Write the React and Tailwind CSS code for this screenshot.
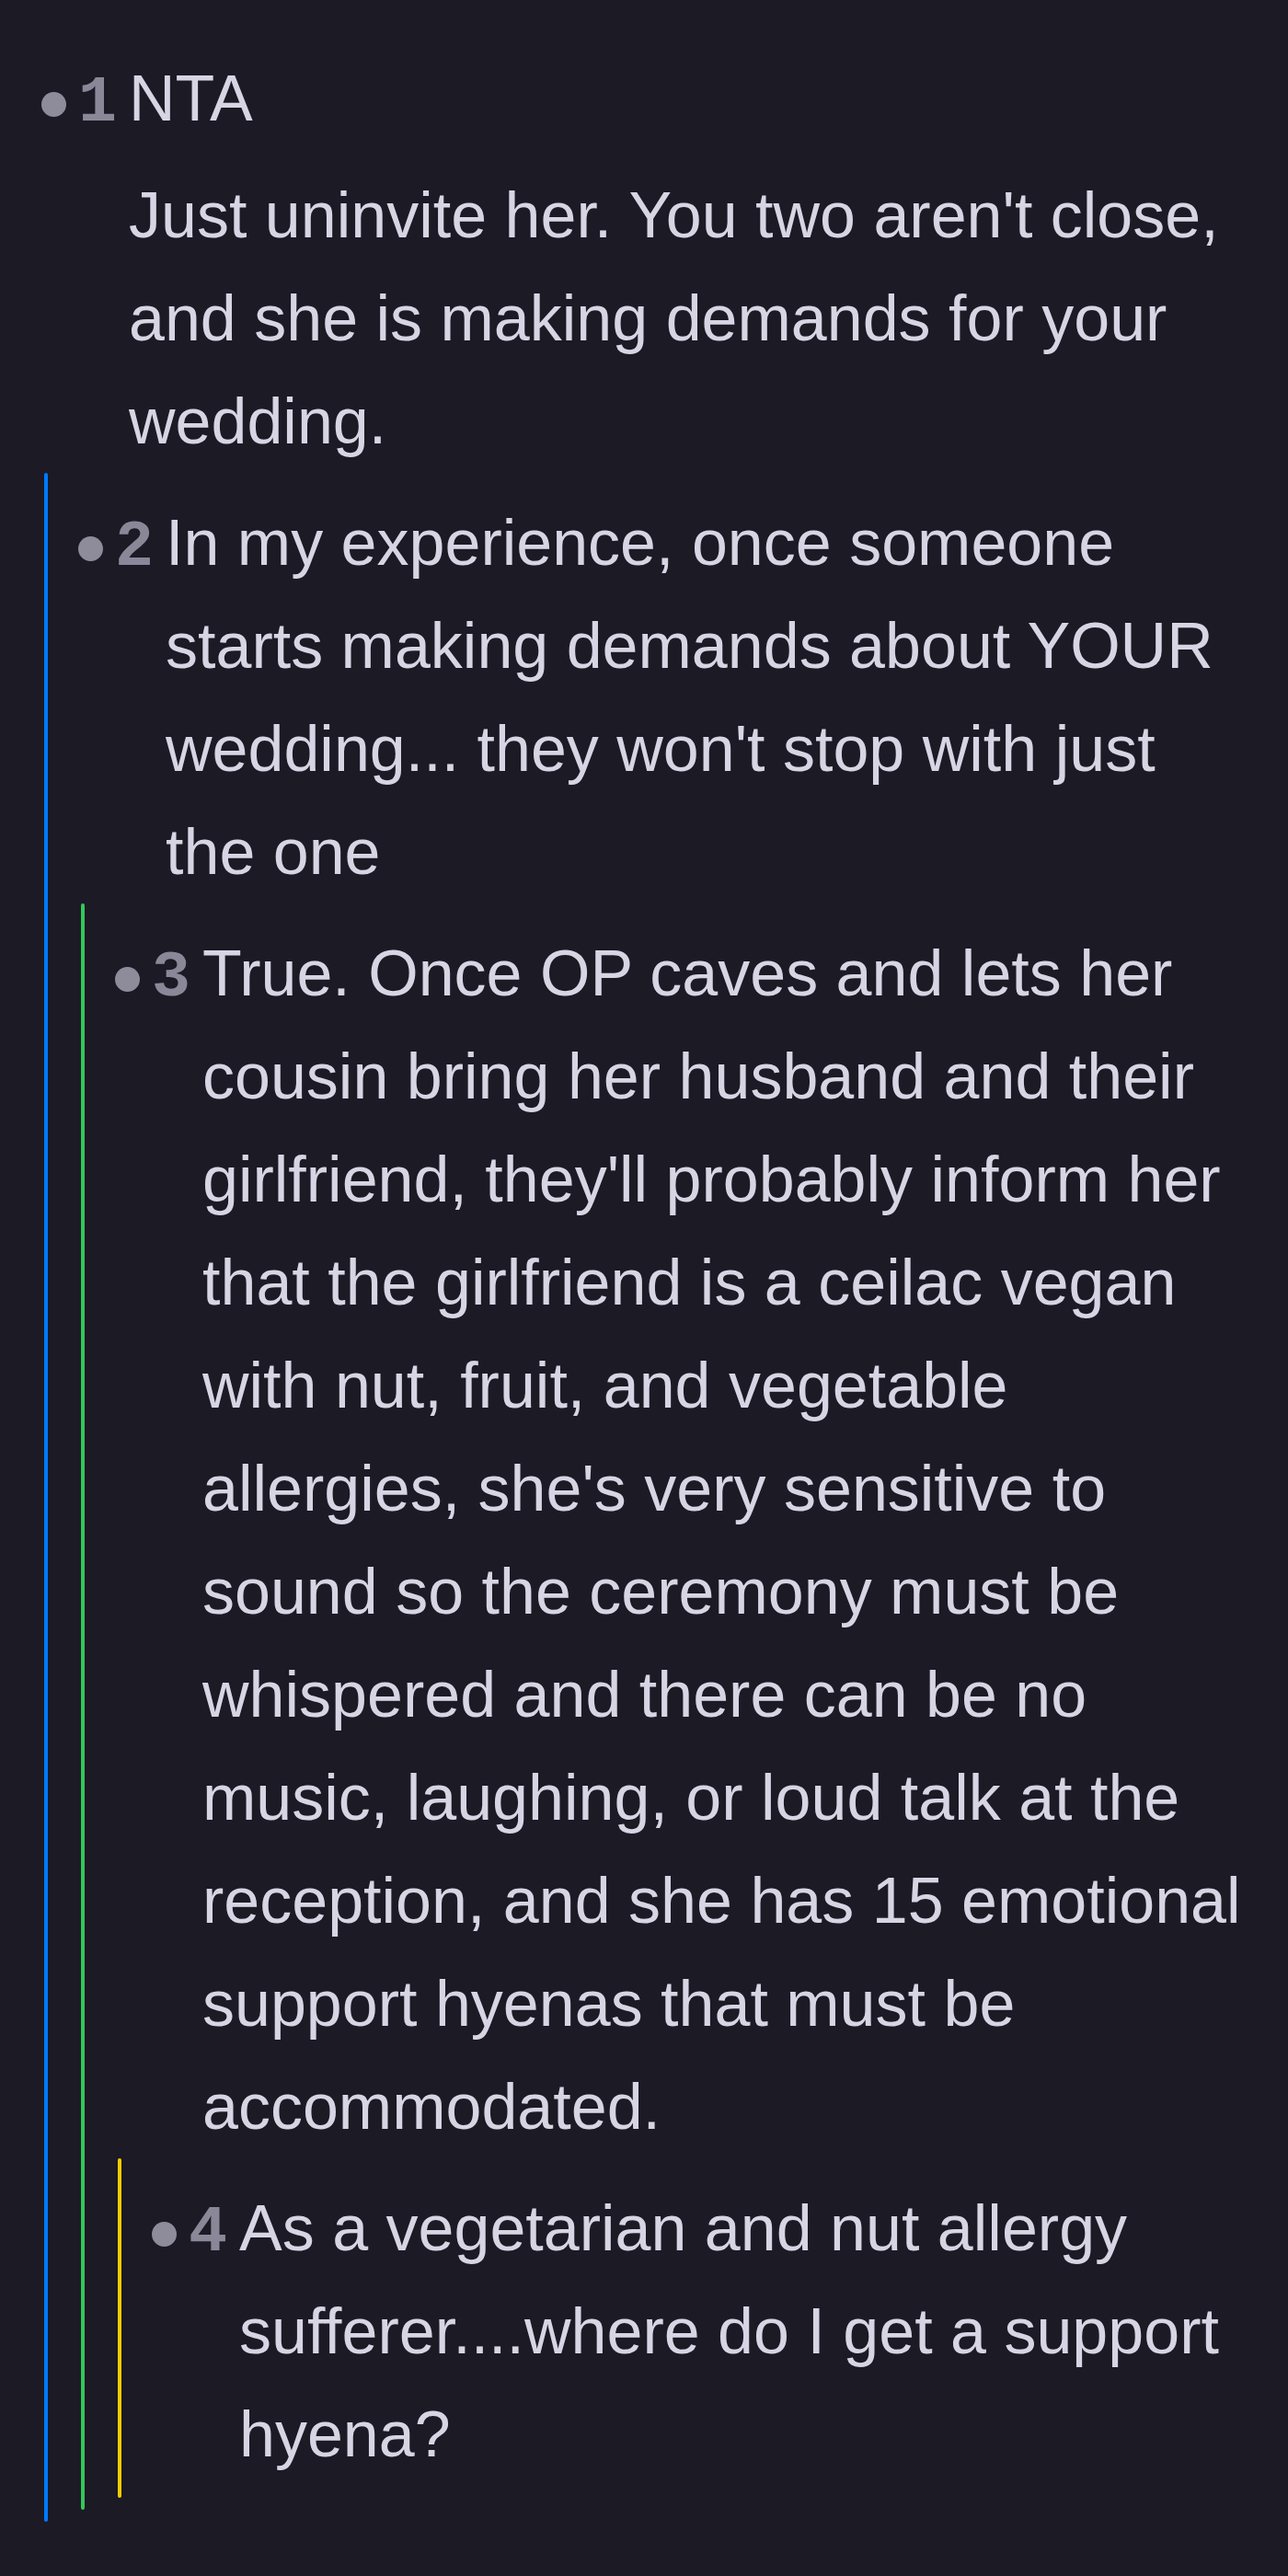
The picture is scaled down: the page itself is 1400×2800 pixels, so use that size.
import React from "react";

const comments = {
  n: 1,
  paras: [
    "NTA",
    "Just uninvite her. You two aren't close, and she is making demands for your wedding.",
  ],
  children: [
    {
      n: 2,
      line: "bg-[#007aff]",
      paras: [
        "In my experience, once someone starts making demands about YOUR wedding... they won't stop with just the one",
      ],
      children: [
        {
          n: 3,
          line: "bg-[#34c759]",
          paras: [
            "True. Once OP caves and lets her cousin bring her husband and their girlfriend, they'll probably inform her that the girlfriend is a ceilac vegan with nut, fruit, and vegetable allergies, she's very sensitive to sound so the ceremony must be whispered and there can be no music, laughing, or loud talk at the reception, and she has 15 emotional support hyenas that must be accommodated.",
          ],
          children: [
            {
              n: 4,
              line: "bg-[#ffcc00]",
              paras: [
                "As a vegetarian and nut allergy sufferer....where do I get a support hyena?",
              ],
              children: [],
            },
          ],
        },
      ],
    },
  ],
};

function Body({ c }) {
  return (
    <div className="pt-5 pb-[13px]">
      <div className="flex items-start">
        <div className="flex h-[112px] shrink-0 items-center pt-3">
          <span className="block h-[27px] w-[27px] rounded-full bg-[#8e8c9b]" />
        </div>
        <div className="flex flex-1 items-baseline">
          <span className="ml-[13px] w-[42px] shrink-0 text-center font-['Liberation_Mono',monospace] text-[70px] font-bold leading-[112px] text-[#8a8898]">
            {c.n}
          </span>
          <div className="ml-[13px] flex flex-1 flex-col gap-[15px] font-['Liberation_Sans',Arial,sans-serif] text-[70px] leading-[112px] text-[#d7d5e3]">
            {c.paras.map((p, i) => (
              <p key={i}>{p}</p>
            ))}
          </div>
        </div>
      </div>
      {c.children.length > 0 && (
        <div className="ml-[3px]">
          {c.children.map((ch) => (
            <Nested key={ch.n} c={ch} />
          ))}
        </div>
      )}
    </div>
  );
}

function Nested({ c }) {
  return (
    <div className="flex">
      <div className={`w-1 shrink-0 rounded-full ${c.line}`} />
      <div className="flex-1 pl-[33px]">
        <Body c={c} />
      </div>
    </div>
  );
}

export default function App() {
  return (
    <div className="min-h-screen bg-[#1b1a25] pt-[31px] pl-[45px] pr-[40px]">
      <Body c={comments} />
    </div>
  );
}
